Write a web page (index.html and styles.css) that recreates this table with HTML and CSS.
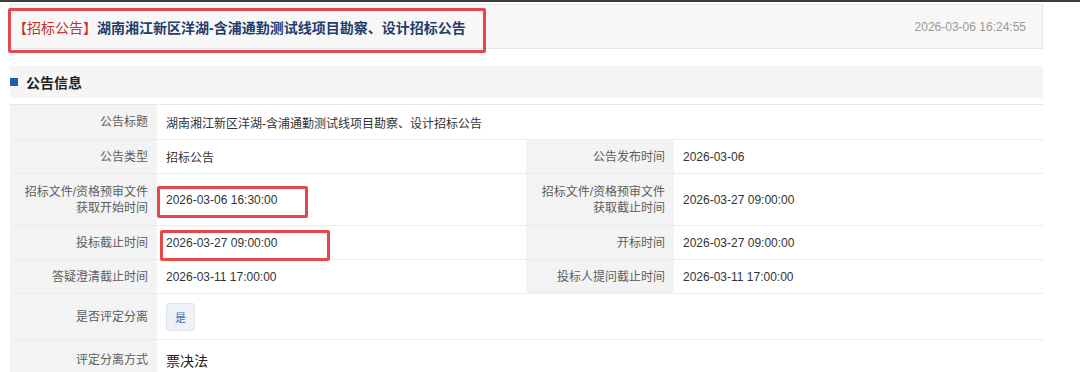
FILE: index.html
```html
<!DOCTYPE html>
<html lang="zh-CN">
<head>
<meta charset="utf-8">
<title>招标公告</title>
<link rel="stylesheet" href="styles.css">
</head>
<body>
<div class="topline"></div>
<div class="page">
  <div class="head">
    <h1 class="title"><span class="tag">【招标公告】</span>湖南湘江新区洋湖-含浦通勤测试线项目勘察、设计招标公告</h1>
    <span class="pubtime">2026-03-06 16:24:55</span>
  </div>

  <div class="section">
    <span class="sq"></span>
    <span class="section-name">公告信息</span>
  </div>

  <div class="info">
    <div class="lab r1">公告标题</div>
    <div class="val span3 r1">湖南湘江新区洋湖-含浦通勤测试线项目勘察、设计招标公告</div>

    <div class="lab r2">公告类型</div>
    <div class="val r2">招标公告</div>
    <div class="lab r2">公告发布时间</div>
    <div class="val r2">2026-03-06</div>

    <div class="lab r3">招标文件/资格预审文件<br>获取开始时间</div>
    <div class="val r3">2026-03-06 16:30:00</div>
    <div class="lab r3">招标文件/资格预审文件<br>获取截止时间</div>
    <div class="val r3">2026-03-27 09:00:00</div>

    <div class="lab r4">投标截止时间</div>
    <div class="val r4">2026-03-27 09:00:00</div>
    <div class="lab r4">开标时间</div>
    <div class="val r4">2026-03-27 09:00:00</div>

    <div class="lab r5">答疑澄清截止时间</div>
    <div class="val r5">2026-03-11 17:00:00</div>
    <div class="lab r5">投标人提问截止时间</div>
    <div class="val r5">2026-03-11 17:00:00</div>

    <div class="lab r6">是否评定分离</div>
    <div class="val span3 r6"><span class="badge">是</span></div>

    <div class="lab r7">评定分离方式</div>
    <div class="val span3 r7 big">票决法</div>
  </div>

  <div class="mark mark-title"></div>
  <div class="mark mark-start"></div>
  <div class="mark mark-deadline"></div>
</div>
</body>
</html>
```

FILE: styles.css
```css
* { box-sizing: border-box; }

html, body {
  margin: 0;
  padding: 0;
  background: #ffffff;
  font-family: "Liberation Sans", Arial, "Noto Sans CJK SC", sans-serif;
  color: #333333;
}

.topline {
  height: 2px;
  background: #3d3d3d;
}

.page {
  position: relative;
  width: 1033px;
  margin-left: 10px;
  padding-top: 2px;
}

.head {
  height: 45px;
  display: flex;
  align-items: center;
  justify-content: space-between;
  padding: 0 16px 0 2px;
  background: #f7f7f7;
  border: 1px solid #e6e6e6;
}

.title {
  margin: 0;
  font-size: 14px;
  font-weight: bold;
  color: #1f3d6b;
}

.tag {
  font-weight: normal;
  color: #c9302c;
}

.pubtime {
  font-size: 12px;
  color: #999999;
}

.section {
  margin-top: 17px;
  height: 32px;
  display: flex;
  align-items: center;
  background: #f5f5f5;
}

.sq {
  width: 8px;
  height: 8px;
  background: #1d5fa8;
  margin-right: 8px;
}

.section-name {
  font-size: 14px;
  font-weight: bold;
  color: #222222;
}

.info {
  margin-top: 6px;
  display: grid;
  grid-template-columns: 147px 369px 148px 369px;
  border-top: 1px solid #e8e8e8;
  border-right: 1px solid #e8e8e8;
}

.lab, .val {
  display: flex;
  align-items: center;
  border-bottom: 1px solid #ececec;
}

.lab {
  justify-content: flex-end;
  text-align: right;
  padding-right: 9px;
  background: #f3f3f3;
  color: #5e5e5e;
  font-size: 12px;
  line-height: 16px;
}

.val {
  padding-left: 9px;
  background: #ffffff;
  color: #333333;
  font-size: 12px;
}

.span3 { grid-column: span 3; }

.r1 { height: 35px; }
.r2 { height: 34px; }
.r3 { height: 52px; }
.r4 { height: 34px; }
.r5 { height: 34px; }
.r6 { height: 46px; }
.r7 { height: 40px; }

.big {
  font-size: 14px;
  color: #222222;
}

.badge {
  display: inline-flex;
  align-items: center;
  justify-content: center;
  width: 29px;
  height: 28px;
  background: #eef2f7;
  border: 1px solid #dde4ec;
  border-radius: 3px;
  color: #3a6db3;
  font-size: 11px;
}

.mark {
  position: absolute;
  border: 3px solid #e5484b;
  border-radius: 2px;
  pointer-events: none;
}

.mark-title { left: -2px; top: 6px; width: 478px; height: 45px; }
.mark-start { left: 147px; top: 184px; width: 151px; height: 32px; }
.mark-deadline { left: 150px; top: 228px; width: 170px; height: 31px; }
```
